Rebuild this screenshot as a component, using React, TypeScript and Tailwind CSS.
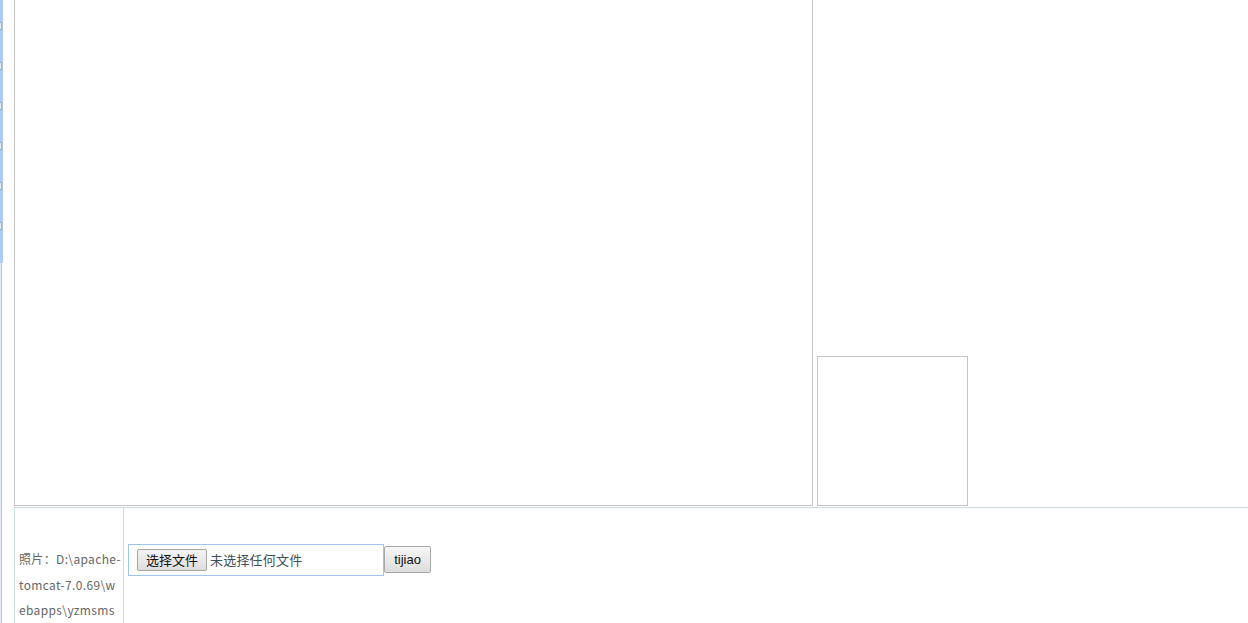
export default function App() {
  const bumps = [22, 62, 102, 142, 182, 222];
  const pathLines = ["照片：D:\\apache-", "tomcat-7.0.69\\w", "ebapps\\yzmsms"];
  return (
    <div className="relative flex h-[623px] w-[1248px] overflow-hidden bg-white font-['Noto_Sans_CJK_SC',sans-serif]">
      {/* left frame edge */}
      <div className="relative w-[14px] shrink-0">
        <div className="h-[263px] w-[3px] bg-[#aecbf7]" />
        <div className="h-[360px] w-[2px] border-r border-[#b4c8e0] bg-[#dfe9f7]" />
        {bumps.map((y) => (
          <div
            key={y}
            className="absolute left-0 h-[8px] w-[2px] border-y border-r border-[#9fb0c4] bg-[#e6edf5]"
            style={{ top: y }}
          />
        ))}
      </div>

      <div className="flex flex-1 flex-col">
        <div className="flex h-[506px] shrink-0">
          <div className="h-full w-[799px] border-x border-b border-[#c4c4c4]" />
          <div className="flex flex-1 items-end pl-[4px]">
            <div className="h-[150px] w-[151px] border border-[#c4c4c4]" />
          </div>
        </div>

        <div className="mt-[1px] flex flex-1 border-t border-[#c8dfe0]">
          <div className="w-[110px] shrink-0 border-x border-[#c8dfe0] pl-[4px] pt-[38px] text-[12px] leading-[25.5px] tracking-[0.35px] text-[#666]">
            {pathLines.map((line) => (
              <div key={line} className="whitespace-nowrap">
                {line}
              </div>
            ))}
          </div>
          <div className="flex items-start pl-[4px] pt-[36px]">
            <div className="flex h-[32px] w-[256px] items-center border border-[#9ec5ee] pl-[8px]">
              <button className="h-[22px] w-[70px] rounded-[2px] border border-[#a3a3a3] bg-gradient-to-b from-[#f4f4f4] to-[#dedede] text-[13px] leading-[20px] text-[#111]">
                选择文件
              </button>
              <span className="ml-[3px] text-[13px] tracking-[0.2px] text-[#3d4f57]">未选择任何文件</span>
            </div>
            <button className="mt-[2px] h-[27px] w-[47px] rounded-[2px] border border-[#a8a8a8] bg-gradient-to-b from-[#f6f6f6] to-[#dddddd] font-['Liberation_Sans',sans-serif] text-[13px] text-[#111]">
              tijiao
            </button>
          </div>
        </div>
      </div>
    </div>
  );
}
